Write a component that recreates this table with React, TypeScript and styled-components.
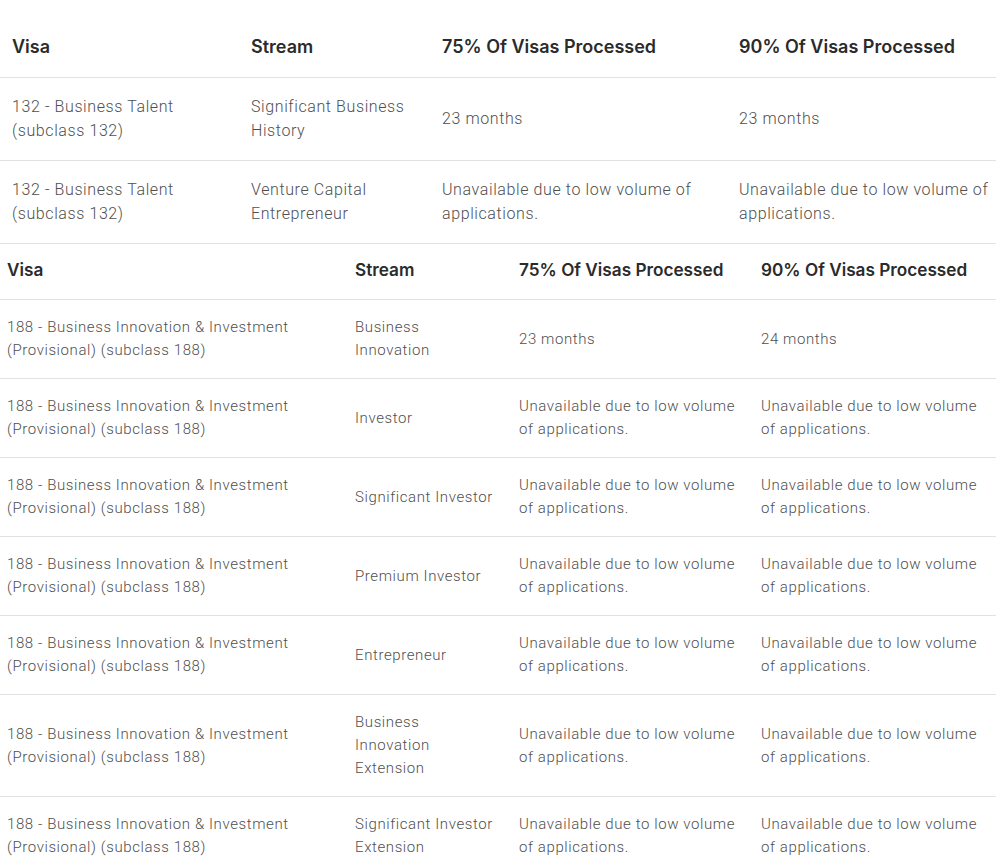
import React from "react";
import styled, { createGlobalStyle } from "styled-components";

const GlobalStyle = createGlobalStyle`
  html, body { margin: 0; padding: 0; background: #ffffff; }
  body { font-family: Roboto, "Noto Sans", Arial, sans-serif; }
`;

const Page = styled.div`
  width: 996px;
  display: flex;
  flex-direction: column;
`;

const Table = styled.table`
  width: 100%;
  border-collapse: collapse;
  table-layout: fixed;
`;

const HeadCell = styled.th<{ $size: number; $pad: number; $top: number; $bottom: number }>`
  text-align: left;
  font-family: Inter, Roboto, Arial, sans-serif;
  font-weight: 600;
  font-size: ${(p) => p.$size}px;
  line-height: 27px;
  color: #2b2b2b;
  padding: ${(p) => p.$top}px ${(p) => p.$pad}px ${(p) => p.$bottom}px;
  border-bottom: 1px solid #e2e2e2;
  vertical-align: middle;
`;

const Cell = styled.td<{ $size: number; $lh: number; $pad: number; $padRight: number; $vpad: number }>`
  font-family: Roboto, Arial, sans-serif;
  font-weight: 300;
  font-size: ${(p) => p.$size}px;
  line-height: ${(p) => p.$lh}px;
  letter-spacing: 0.6px;
  color: #4f4f4f;
  padding: ${(p) => p.$vpad}px ${(p) => p.$padRight}px ${(p) => p.$vpad}px ${(p) => p.$pad}px;
  border-bottom: 1px solid #e2e2e2;
  vertical-align: middle;
`;

type Row = [string, string, string, string];

const UNAV = "Unavailable due to low volume of applications.";
const V188 = "188 - Business Innovation & Investment (Provisional) (subclass 188)";

const rows132: Row[] = [
  ["132 - Business Talent (subclass 132)", "Significant Business History", "23 months", "23 months"],
  ["132 - Business Talent (subclass 132)", "Venture Capital Entrepreneur", UNAV, UNAV],
];

const rows188: Row[] = [
  [V188, "Business Innovation", "23 months", "24 months"],
  [V188, "Investor", UNAV, UNAV],
  [V188, "Significant Investor", UNAV, UNAV],
  [V188, "Premium Investor", UNAV, UNAV],
  [V188, "Entrepreneur", UNAV, UNAV],
  [V188, "Business Innovation Extension", UNAV, UNAV],
  [V188, "Significant Investor Extension", UNAV, UNAV],
];

const headers = ["Visa", "Stream", "75% Of Visas Processed", "90% Of Visas Processed"];

type Spec = {
  cols: number[];
  headSize: number;
  headTop: number;
  headBottom: number;
  size: number;
  lh: number;
  pad: number;
  padRight: number;
  vpad: number;
};

const spec132: Spec = { cols: [239, 191, 297, 269], headSize: 18, headTop: 33, headBottom: 17, size: 16, lh: 24, pad: 12, padRight: 2, vpad: 17 };
const spec188: Spec = { cols: [348, 164, 242, 242], headSize: 17.2, headTop: 12, headBottom: 16, size: 15, lh: 23, pad: 7, padRight: 15, vpad: 16 };

function VisaTable({ spec, rows }: { spec: Spec; rows: Row[] }) {
  return (
    <Table>
      <colgroup>
        {spec.cols.map((w, i) => (
          <col key={i} style={{ width: w }} />
        ))}
      </colgroup>
      <thead>
        <tr>
          {headers.map((h) => (
            <HeadCell key={h} $size={spec.headSize} $pad={spec.pad} $top={spec.headTop} $bottom={spec.headBottom}>
              {h}
            </HeadCell>
          ))}
        </tr>
      </thead>
      <tbody>
        {rows.map((r, i) => (
          <tr key={i}>
            {r.map((c, j) => (
              <Cell
                key={j}
                $size={spec.size}
                $lh={spec.lh}
                $pad={spec.pad}
                $padRight={spec.padRight}
                $vpad={spec.vpad}
              >
                {c}
              </Cell>
            ))}
          </tr>
        ))}
      </tbody>
    </Table>
  );
}

export default function App() {
  return (
    <>
      <GlobalStyle />
      <Page>
        <VisaTable spec={spec132} rows={rows132} />
        <VisaTable spec={spec188} rows={rows188} />
      </Page>
    </>
  );
}
